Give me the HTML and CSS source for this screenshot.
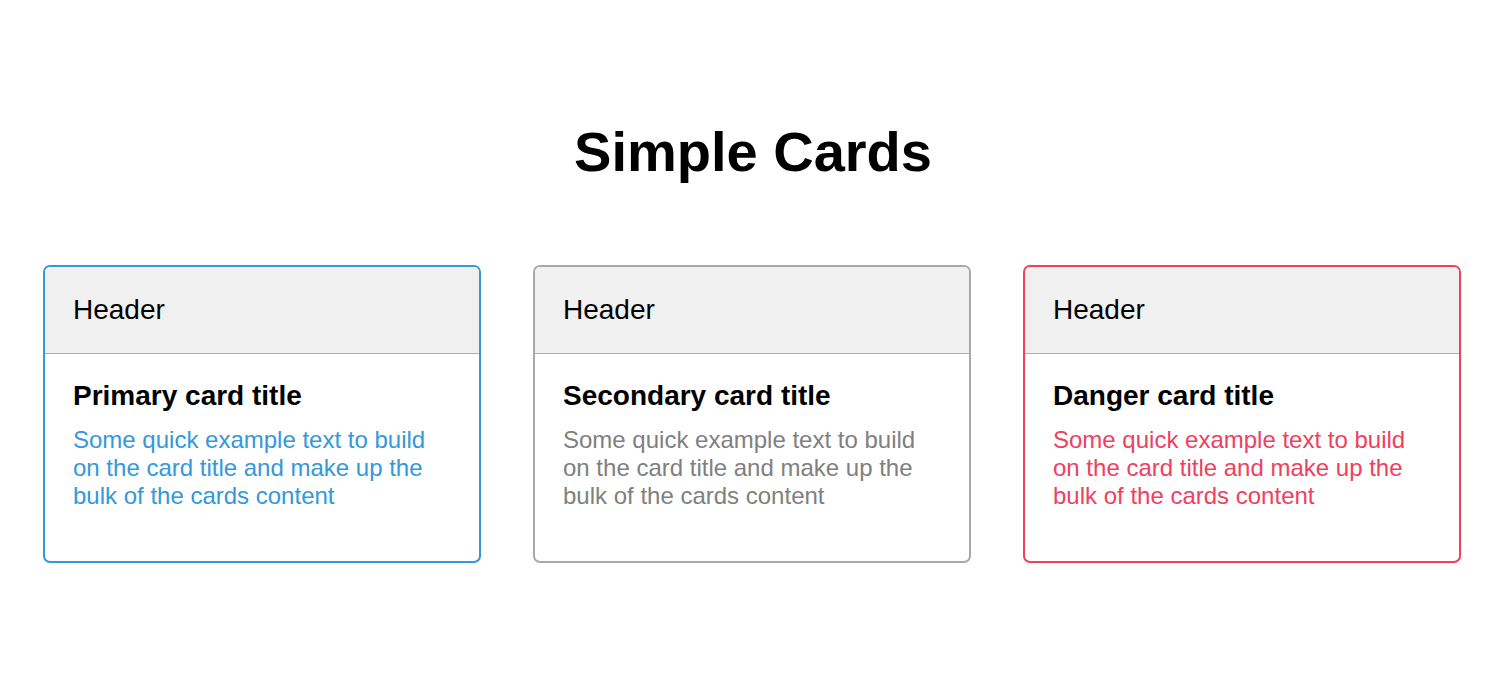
FILE: index.html
```html
<!DOCTYPE html>
<html>
<head>
<meta charset="utf-8">
<link rel="stylesheet" href="styles.css">
</head>
<body>
<h1 class="page-title">Simple Cards</h1>
<div class="cards">
  <div class="card card-primary">
    <div class="card-header">Header</div>
    <div class="card-body">
      <h2 class="card-title">Primary card title</h2>
      <p class="card-text">Some quick example text to build on the card title and make up the bulk of the cards content</p>
    </div>
  </div>
  <div class="card card-secondary">
    <div class="card-header">Header</div>
    <div class="card-body">
      <h2 class="card-title">Secondary card title</h2>
      <p class="card-text">Some quick example text to build on the card title and make up the bulk of the cards content</p>
    </div>
  </div>
  <div class="card card-danger">
    <div class="card-header">Header</div>
    <div class="card-body">
      <h2 class="card-title">Danger card title</h2>
      <p class="card-text">Some quick example text to build on the card title and make up the bulk of the cards content</p>
    </div>
  </div>
</div>
</body>
</html>
```
FILE: styles.css
```css
html, body {
  margin: 0;
  padding: 0;
  background: #fff;
  font-family: "Liberation Sans", Arial, sans-serif;
  color: #000;
}
.page-title {
  margin: 0;
  padding-top: 119px;
  text-align: center;
  font-size: 56px;
  line-height: 66px;
  font-weight: bold;
}
.cards {
  display: flex;
  justify-content: center;
  gap: 52px;
  margin-top: 80px;
  padding-right: 2px;
}
.card {
  width: 438px;
  height: 298px;
  box-sizing: border-box;
  border: 2px solid;
  border-radius: 7px;
  overflow: hidden;
}
.card-primary { border-color: #3498db; }
.card-primary .card-text { color: #3498db; }
.card-secondary { border-color: #a9a9a9; }
.card-secondary .card-text { color: #808080; }
.card-danger { border-color: #f0405f; }
.card-danger .card-text { color: #f0405f; }
.card-header {
  background: #f0f0f0;
  border-bottom: 1px solid #b0b0b0;
  padding: 27px 28px;
  font-size: 28px;
  line-height: 32px;
}
.card-body {
  padding: 26px 28px;
}
.card-title {
  margin: 0;
  font-size: 28px;
  line-height: 32px;
  font-weight: bold;
}
.card-text {
  margin: 14px 0 0;
  font-size: 24px;
  line-height: 28px;
}
```
